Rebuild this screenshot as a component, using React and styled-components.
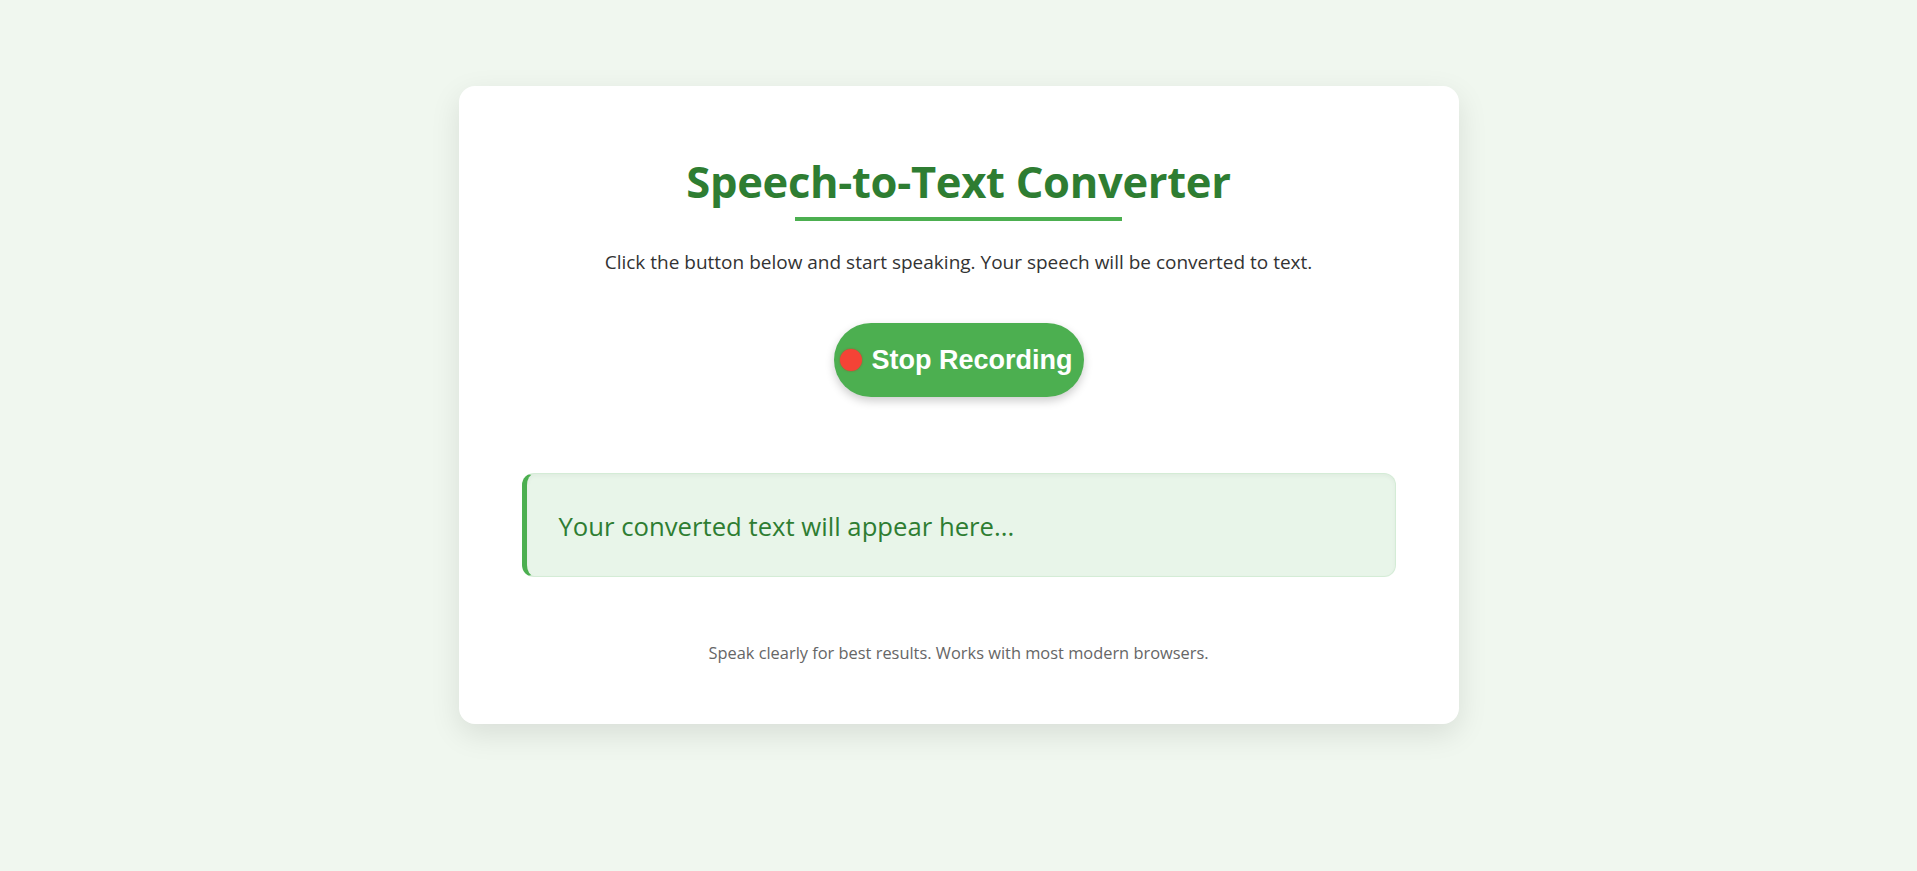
import React from 'react';
// Styles
import styled, {createGlobalStyle} from "styled-components";

const App = () => {
    return (
        <>
            <GlobalStyle/>
            <Page>
                <Card>
                    <Title>Speech-to-Text Converter</Title>
                    <Subtitle>
                        Click the button below and start speaking. Your speech will be converted to text.
                    </Subtitle>

                    <RecordButton type="button">
                        <RecDot/>
                        Stop Recording
                    </RecordButton>

                    <Output>
                        <p>Your converted text will appear here...</p>
                    </Output>

                    <Footer>Speak clearly for best results. Works with most modern browsers.</Footer>
                </Card>
            </Page>
        </>
    );
};

// Styles
const GlobalStyle = createGlobalStyle`
  * {
    box-sizing: border-box;
  }

  body {
    margin: 0;
    background: #f0f7ef;
    font-family: "Open Sans", "Noto Sans", sans-serif;
  }
`;

const Page = styled.div`
  min-height: 871px;
  display: flex;
  justify-content: center;
  align-items: flex-start;
  padding-top: 86px;
`;

const Card = styled.div`
  width: 1000px;
  background: white;
  border-radius: 16px;
  padding: 40px 63px 61px;
  box-shadow: 0 10px 30px rgba(0, 0, 0, 0.1);
  display: flex;
  flex-direction: column;
  align-items: center;
  text-align: center;
`;

const Title = styled.h1`
  position: relative;
  margin: 32px 0 0;
  padding-bottom: 15px;
  font-size: 43.5px;
  line-height: 48px;
  font-weight: 700;
  color: #2e7d32;
  letter-spacing: -0.3px;

  &::after {
    content: '';
    position: absolute;
    left: 20%;
    bottom: 0;
    width: 60%;
    height: 4px;
    background: #4caf50;
  }
`;

const Subtitle = styled.p`
  margin: 29px 0 0;
  font-size: 19px;
  line-height: 24px;
  color: #333;
`;

const RecordButton = styled.button`
  margin-top: 49px;
  height: 74px;
  display: inline-flex;
  align-items: center;
  gap: 10px;
  padding: 0 11px 0 6px;
  border: none;
  border-radius: 40px;
  background: #4caf50;
  color: white;
  font-family: "Liberation Sans", Arial, sans-serif;
  font-size: 27px;
  font-weight: 700;
  box-shadow: 0 4px 10px rgba(0, 0, 0, 0.2);
  cursor: pointer;
`;

const RecDot = styled.span`
  width: 22px;
  height: 22px;
  border-radius: 50%;
  background: #f44336;
  box-shadow: 0 0 2px rgba(180, 60, 40, 0.8);
`;

const Output = styled.div`
  align-self: stretch;
  margin-top: 76px;
  padding: 37px 32px 33px;
  background: #e8f5e9;
  border: 1px solid rgba(76, 175, 80, 0.12);
  border-left: 5px solid #4caf50;
  border-radius: 12px;
  text-align: left;
  box-shadow: inset 0 2px 4px rgba(0, 0, 0, 0.04);

  p {
    margin: 0;
    font-size: 25.7px;
    line-height: 32px;
    color: #2e7d32;
  }
`;

const Footer = styled.p`
  margin: 66px 0 0;
  font-size: 16.4px;
  line-height: 20px;
  color: #666;
`;

export default App;
